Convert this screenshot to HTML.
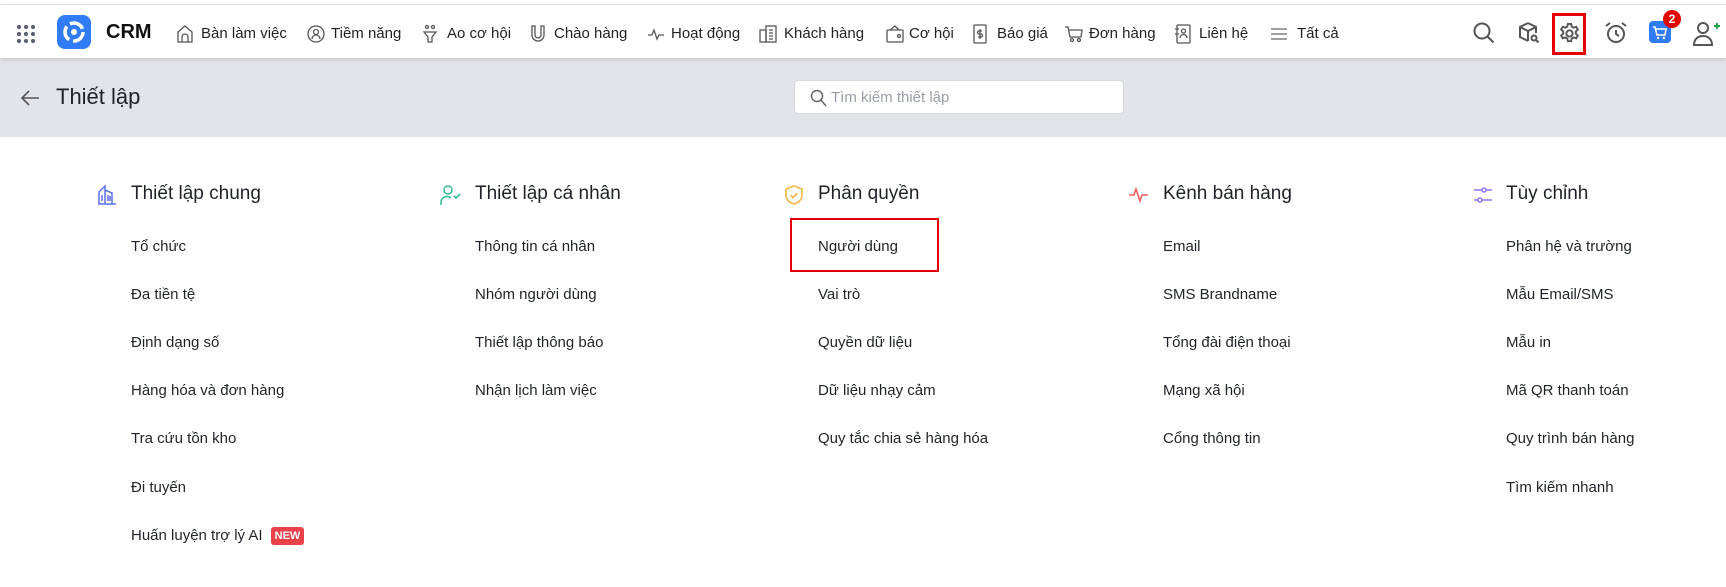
<!DOCTYPE html>
<html><head><meta charset="utf-8"><style>
*{margin:0;padding:0;box-sizing:border-box}
body{width:1726px;height:587px;overflow:hidden;background:#fff;font-family:"Liberation Sans",sans-serif;color:#1f2329;position:relative}
.abs{position:absolute}
.topline{left:0;top:0;width:1726px;height:5px;background:#fff;border-bottom:1px solid #e3e4e8}
.hdr{left:0;top:5px;width:1726px;height:53px;background:#fff;box-shadow:0 2px 4px rgba(0,0,0,.12);z-index:2}
.nav{position:absolute;top:19px;font-size:15px;color:#222;line-height:20px;white-space:nowrap}
.ni{position:absolute;top:19px}
.gray{left:0;top:58px;width:1726px;height:79px;background:#e3e4e9}
.title{left:56px;top:84px;font-size:22px;color:#1f2329}
.search{left:794px;top:80px;width:330px;height:34px;background:#fff;border:1px solid #d5d7dd;border-radius:4px}
.search span{position:absolute;left:36px;top:8px;font-size:15px;color:#9a9ea8}
.h{position:absolute;top:183px;font-size:19px;color:#1f2329;white-space:nowrap}
.it{position:absolute;font-size:15px;color:#1f2329;white-space:nowrap}
</style></head><body>
<div class="abs topline"></div>
<div class="abs hdr">
<svg class="abs" style="left:16px;top:19px" width="20" height="20" fill="#5b6270"><circle cx="3" cy="3" r="2.1"/><circle cx="10" cy="3" r="2.1"/><circle cx="17" cy="3" r="2.1"/><circle cx="3" cy="10" r="2.1"/><circle cx="10" cy="10" r="2.1"/><circle cx="17" cy="10" r="2.1"/><circle cx="3" cy="17" r="2.1"/><circle cx="10" cy="17" r="2.1"/><circle cx="17" cy="17" r="2.1"/></svg>
<svg class="abs" style="left:57px;top:10px" width="34" height="34"><rect width="34" height="34" rx="8" fill="#2f7cf6"/><circle cx="17" cy="17" r="9" fill="none" stroke="#fff" stroke-width="3.5" stroke-dasharray="15 4"/><circle cx="17" cy="17" r="3" fill="#fff"/></svg>
<div class="nav" style="left:106px;top:17px;font-size:20px;font-weight:bold;color:#111">CRM</div>
<svg class="ni" style="left:176px" width="18" height="20" fill="none" stroke="#555" stroke-width="1.3"><path d="M2 8L9 2l7 6v10H2z"/><path d="M6 18v-5a3 3 0 0 1 6 0v5"/></svg>
<div class="nav" style="left:201px">Bàn làm việc</div>
<svg class="ni" style="left:306px" width="20" height="20" fill="none" stroke="#555" stroke-width="1.3"><circle cx="10" cy="10" r="8"/><circle cx="10" cy="8" r="2.5"/><path d="M6 15a4 4 0 0 1 8 0"/></svg>
<div class="nav" style="left:331px">Tiềm năng</div>
<svg class="ni" style="left:422px" width="16" height="20" fill="none" stroke="#555" stroke-width="1.3"><circle cx="5" cy="3" r="1.5"/><circle cx="11" cy="3" r="1.5"/><path d="M2 8h12l-4 5v5h-4v-5z"/></svg>
<div class="nav" style="left:447px">Ao cơ hội</div>
<svg class="ni" style="left:530px" width="16" height="20" fill="none" stroke="#555" stroke-width="1.3"><path d="M2 2v9a6 6 0 0 0 12 0V2h-3v9a3 3 0 0 1-6 0V2z"/></svg>
<div class="nav" style="left:554px">Chào hàng</div>
<svg class="ni" style="left:647px" width="18" height="20" fill="none" stroke="#555" stroke-width="1.3"><path d="M1 11h4l2-5 3 9 2-4h5"/></svg>
<div class="nav" style="left:671px">Hoạt động</div>
<svg class="ni" style="left:759px" width="18" height="20" fill="none" stroke="#555" stroke-width="1.3"><rect x="1" y="6" width="6" height="12"/><rect x="7" y="2" width="10" height="16"/><path d="M10 6h4M10 9h4M10 12h4M10 15h4"/></svg>
<div class="nav" style="left:784px">Khách hàng</div>
<svg class="ni" style="left:886px" width="18" height="20" fill="none" stroke="#555" stroke-width="1.3"><rect x="1" y="6" width="16" height="12" rx="1"/><path d="M4 6l5-4 4 4"/><circle cx="13" cy="12" r="1.5"/></svg>
<div class="nav" style="left:909px">Cơ hội</div>
<svg class="ni" style="left:972px" width="16" height="20" fill="none" stroke="#555" stroke-width="1.3"><rect x="2" y="1" width="12" height="18" rx="1"/><path d="M8 5v10M10 7H7a1.5 1.5 0 0 0 0 3h2a1.5 1.5 0 0 1 0 3H6"/></svg>
<div class="nav" style="left:997px">Báo giá</div>
<svg class="ni" style="left:1064px" width="20" height="20" fill="none" stroke="#555" stroke-width="1.3"><path d="M1 3h3l2 10h11l1-7H5"/><circle cx="8" cy="16" r="1.5"/><circle cx="15" cy="16" r="1.5"/></svg>
<div class="nav" style="left:1089px">Đơn hàng</div>
<svg class="ni" style="left:1174px" width="18" height="20" fill="none" stroke="#555" stroke-width="1.3"><rect x="3" y="1" width="13" height="18" rx="1"/><circle cx="9.5" cy="7" r="2"/><path d="M6 14a3.5 3.5 0 0 1 7 0M1 5h4M1 10h4"/></svg>
<div class="nav" style="left:1199px">Liên hệ</div>
<svg class="ni" style="left:1270px" width="18" height="20" fill="none" stroke="#666" stroke-width="1.3"><path d="M1 5h16M1 10h16M1 15h16"/></svg>
<div class="nav" style="left:1297px">Tất cả</div>
<svg class="abs" style="left:1472px;top:16px" width="24" height="24" fill="none" stroke="#555" stroke-width="2"><circle cx="10" cy="10" r="7.5"/><path d="M15.5 15.5l6 6"/></svg>
<svg class="abs" style="left:1517px;top:16px" width="24" height="24" fill="none" stroke="#555" stroke-width="2"><path d="M11 2l8 4v6M11 2L3 6v10l8 4M3 6l8 4 8-4M11 10v10"/><circle cx="17" cy="17" r="2.5"/><path d="M19 19l2.5 2.5"/></svg>
<div class="abs" style="left:1552px;top:8px;width:34px;height:42px;border:3px solid #e50000"></div>
<svg class="abs" style="left:1558px;top:17px" width="23" height="23" viewBox="0 0 24 24" fill="none" stroke="#555" stroke-width="2"><path d="M10.3 2h3.4l.6 2.8 2 1.1 2.7-.9 1.7 2.9-2.1 1.9v2.4l2.1 1.9-1.7 2.9-2.7-.9-2 1.1-.6 2.8h-3.4l-.6-2.8-2-1.1-2.7.9-1.7-2.9 2.1-1.9V9.8L3.3 7.9 5 5l2.7.9 2-1.1z"/><circle cx="12" cy="12" r="3.3"/></svg>
<svg class="abs" style="left:1604px;top:16px" width="24" height="24" fill="none" stroke="#555" stroke-width="2"><circle cx="12" cy="13" r="8"/><path d="M12 9v4l3 2M2 5l4-3M22 5l-4-3"/></svg>
<svg class="abs" style="left:1649px;top:16px" width="22" height="22"><rect width="22" height="22" rx="4" fill="#2f7cf6"/><path d="M4 6h2l2 8h8l1-6H7" fill="none" stroke="#fff" stroke-width="1.6"/><circle cx="9" cy="17" r="1.2" fill="#fff"/><circle cx="15" cy="17" r="1.2" fill="#fff"/></svg>
<div class="abs" style="left:1663px;top:5px;width:18px;height:18px;border-radius:9px;background:#e50000;color:#fff;font-size:12px;font-weight:bold;text-align:center;line-height:18px">2</div>
<svg class="abs" style="left:1692px;top:15px" width="30" height="28" fill="none" stroke="#555" stroke-width="2"><circle cx="11" cy="8" r="5"/><path d="M2 25c0-6 4-9 9-9s9 3 9 9z"/><path d="M22 6h6M25 3v6" stroke="#22a04a"/></svg>
</div>
<div class="abs gray"></div>
<svg class="abs" style="left:20px;top:89px" width="20" height="18" fill="none" stroke="#555" stroke-width="1.6"><path d="M19 9H2M9 2L2 9l7 7"/></svg>
<div class="abs title">Thiết lập</div>
<div class="abs search"><svg class="abs" style="left:15px;top:8px" width="17" height="18" fill="none" stroke="#666" stroke-width="1.5"><circle cx="7" cy="7" r="5.5"/><path d="M11 11l5 6"/></svg><span>Tìm kiếm thiết lập</span></div>

<svg class="abs" style="left:97px;top:184px" width="20" height="22" fill="none" stroke="#5b6ff0" stroke-width="1.5"><path d="M2 20V8l6-6v18M8 6l7 3v11M1 20h18M5 11v6M11 11v6M13 12v5"/></svg>
<div class="h" style="left:131px">Thiết lập chung</div>
<svg class="abs" style="left:440px;top:184px" width="22" height="22" fill="none" stroke="#36c08f" stroke-width="1.6"><circle cx="8" cy="6" r="4"/><path d="M1 21v-3a6 6 0 0 1 10-4M14 12l2 2 4-4"/></svg>
<div class="h" style="left:475px">Thiết lập cá nhân</div>
<svg class="abs" style="left:784px;top:184px" width="20" height="22" fill="none" stroke="#f2b74a" stroke-width="1.6"><path d="M10 2l8 3v6c0 5-4 8-8 9-4-1-8-4-8-9V5z"/><path d="M6.5 11l2.5 2.5 4.5-4.5"/></svg>
<div class="h" style="left:818px">Phân quyền</div>
<svg class="abs" style="left:1128px;top:185px" width="22" height="20" fill="none" stroke="#ee5b5b" stroke-width="1.6"><path d="M1 10h5l2-6 4 12 2-6h6"/></svg>
<div class="h" style="left:1163px">Kênh bán hàng</div>
<svg class="abs" style="left:1472px;top:185px" width="22" height="20" fill="none" stroke="#8d7cf2" stroke-width="1.6"><path d="M2 5h8M14 5h6M2 15h4M10 15h10"/><circle cx="12" cy="5" r="2"/><circle cx="8" cy="15" r="2"/></svg>
<div class="h" style="left:1506px">Tùy chỉnh</div>

<div class="it" style="left:131px;top:238px">Tổ chức</div>
<div class="it" style="left:131px;top:286px">Đa tiền tệ</div>
<div class="it" style="left:131px;top:334px">Định dạng số</div>
<div class="it" style="left:131px;top:382px">Hàng hóa và đơn hàng</div>
<div class="it" style="left:131px;top:430px">Tra cứu tồn kho</div>
<div class="it" style="left:131px;top:479px">Đi tuyến</div>
<div class="it" style="left:131px;top:527px">Huấn luyện trợ lý AI</div>
<div class="abs" style="left:271px;top:527px;width:33px;height:18px;background:#e9424a;border-radius:3px;color:#fff;font-size:11px;font-weight:bold;text-align:center;line-height:18px">NEW</div>

<div class="it" style="left:475px;top:238px">Thông tin cá nhân</div>
<div class="it" style="left:475px;top:286px">Nhóm người dùng</div>
<div class="it" style="left:475px;top:334px">Thiết lập thông báo</div>
<div class="it" style="left:475px;top:382px">Nhận lịch làm việc</div>

<div class="abs" style="left:790px;top:218px;width:149px;height:54px;border:2.5px solid #e50000"></div>
<div class="it" style="left:818px;top:238px">Người dùng</div>
<div class="it" style="left:818px;top:286px">Vai trò</div>
<div class="it" style="left:818px;top:334px">Quyền dữ liệu</div>
<div class="it" style="left:818px;top:382px">Dữ liệu nhạy cảm</div>
<div class="it" style="left:818px;top:430px">Quy tắc chia sẻ hàng hóa</div>

<div class="it" style="left:1163px;top:238px">Email</div>
<div class="it" style="left:1163px;top:286px">SMS Brandname</div>
<div class="it" style="left:1163px;top:334px">Tổng đài điện thoại</div>
<div class="it" style="left:1163px;top:382px">Mạng xã hội</div>
<div class="it" style="left:1163px;top:430px">Cổng thông tin</div>

<div class="it" style="left:1506px;top:238px">Phân hệ và trường</div>
<div class="it" style="left:1506px;top:286px">Mẫu Email/SMS</div>
<div class="it" style="left:1506px;top:334px">Mẫu in</div>
<div class="it" style="left:1506px;top:382px">Mã QR thanh toán</div>
<div class="it" style="left:1506px;top:430px">Quy trình bán hàng</div>
<div class="it" style="left:1506px;top:479px">Tìm kiếm nhanh</div>
</body></html>
